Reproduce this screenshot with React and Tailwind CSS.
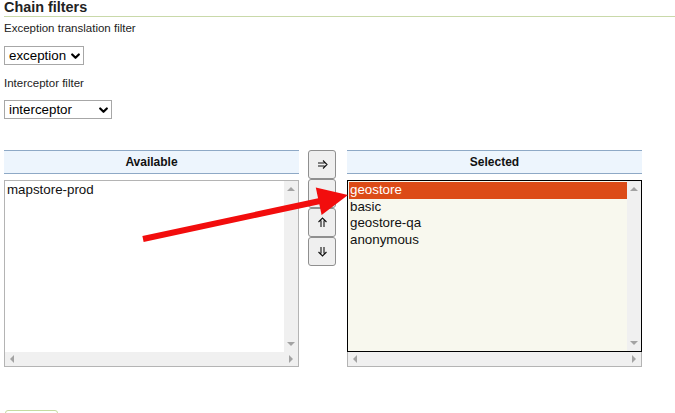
const available = ["mapstore-prod"];
const selected = ["geostore", "basic", "geostore-qa", "anonymous"];
const moves = [0, 180, -90, 90];

function Select({ value, width }) {
  return (
    <div
      className={`flex h-[19px] items-center justify-between border border-[#a7a7a7] bg-white pl-[4px] pr-[3px] text-[13.33px] leading-[17px] text-black ${width}`}
    >
      <span>{value}</span>
      <svg width="9" height="7" viewBox="0 0 9 7" className="mt-[1px]">
        <polyline
          points="1.2,1.5 4.5,4.8 7.8,1.5"
          fill="none"
          stroke="#000"
          strokeWidth="2.2"
          strokeLinecap="round"
          strokeLinejoin="round"
        />
      </svg>
    </div>
  );
}

// double arrow like ⇒, rotated for the other directions
function DoubleArrow({ rotate }) {
  return (
    <svg width="11" height="11" viewBox="0 0 11 11" style={{ transform: `rotate(${rotate}deg)` }}>
      <path
        d="M1 4H7.5M1 7H7.5M6 1.5L10 5.5L6 9.5"
        fill="none"
        stroke="#111"
        strokeWidth="1.1"
        strokeLinejoin="miter"
      />
    </svg>
  );
}

function Tri({ dir }) {
  const cls = {
    up: "border-x-[4px] border-b-[4px] border-x-transparent border-b-[#a3a3a3]",
    down: "border-x-[4px] border-t-[4px] border-x-transparent border-t-[#a3a3a3]",
    left: "border-y-[4px] border-r-[4px] border-y-transparent border-r-[#a3a3a3]",
    right: "border-y-[4px] border-l-[4px] border-y-transparent border-l-[#a3a3a3]",
  }[dir];
  return <div className={`h-0 w-0 ${cls}`} />;
}

function Header({ title }) {
  return (
    <div className="flex h-[24px] items-center justify-center border-y border-[#8ea9c6] bg-[#edf5fd] text-[12px] font-bold text-[#111]">
      {title}
    </div>
  );
}

function ListBox({ items, focused }) {
  return (
    <div className="mt-[6px] flex h-[187px] flex-col">
      <div
        className={`flex min-h-0 flex-1 border ${
          focused ? "border-black bg-[#f8f8ee]" : "border-[#b4b4b4] border-b-0 bg-white"
        }`}
      >
        <div className="flex-1 pt-[1px] pl-[1px]">
          {items.map((item, i) => (
            <div
              key={item}
              className={`h-[16.7px] pl-[1px] text-[13.33px] leading-[16px] ${
                focused && i === 0 ? "bg-[#dc4b17] text-white" : "text-[#111]"
              }`}
            >
              {item}
            </div>
          ))}
        </div>
        <div className="flex w-[14px] flex-col items-center justify-between bg-[#f0f0f0] py-[6px]">
          <Tri dir="up" />
          <Tri dir="down" />
        </div>
      </div>
      <div className="flex h-[15px] items-center justify-between border border-t-0 border-[#b4b4b4] bg-[#f0f0f0] px-[5px]">
        <Tri dir="left" />
        <Tri dir="right" />
      </div>
    </div>
  );
}

export default function App() {
  return (
    <div className="relative h-[413px] w-[675px] overflow-hidden bg-white font-['Liberation_Sans',Arial,sans-serif] text-[#222]">
      <div className="ml-[4px] h-[17px] border-b border-[#c9d9a9] text-[14.4px] font-bold leading-[14px] text-[#222]">
        Chain filters
      </div>

      <div className="pl-[4px]">
        <div className="mt-[4px] h-[14px] text-[11.5px] leading-[14px]">
          Exception translation filter
        </div>
        <div className="mt-[11px]">
          <Select value="exception" width="w-[80px]" />
        </div>

        <div className="mt-[11px] h-[14px] text-[11.5px] leading-[14px]">
          Interceptor filter
        </div>
        <div className="mt-[10px]">
          <Select value="interceptor" width="w-[108px]" />
        </div>

        <div className="mt-[31px] flex items-start">
          <div className="w-[295px]">
            <Header title="Available" />
            <ListBox items={available} />
          </div>

          <div className="ml-[9px] flex w-[28px] flex-col">
            {moves.map((r) => (
              <button
                key={r}
                className="flex h-[29px] w-[28px] items-center justify-center rounded-[3px] border border-[#8f8f8f] bg-[#efefef]"
              >
                <DoubleArrow rotate={r} />
              </button>
            ))}
          </div>

          <div className="ml-[11px] w-[295px]">
            <Header title="Selected" />
            <ListBox items={selected} focused />
          </div>
        </div>

        <div className="mt-[43px] ml-[1px] h-[20px] w-[53px] rounded-[3px] border border-[#c5dba0]" />
      </div>

      <svg
        className="pointer-events-none absolute left-0 top-0"
        width="675"
        height="413"
        viewBox="0 0 675 413"
      >
        <line x1="143" y1="239" x2="320" y2="201" stroke="#f20d0d" strokeWidth="6" />
        <polygon points="348,195 321.6,215 315.8,187.6" fill="#f20d0d" />
      </svg>
    </div>
  );
}
